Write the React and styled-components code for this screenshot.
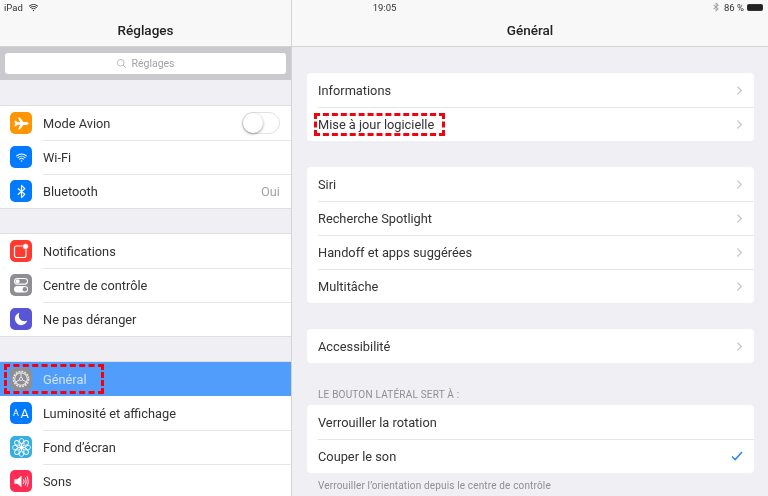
import React from 'react'
import styled, { createGlobalStyle } from 'styled-components'
import { IoAirplane, IoWifi, IoBluetooth, IoMoon, IoSearchOutline, IoChevronForward } from 'react-icons/io5'

const GlobalStyle = createGlobalStyle`
  html, body { margin: 0; padding: 0; background: #efeff4; }
  body { font-family: Roboto, "Liberation Sans", sans-serif; color: #333; overflow: hidden; }
`

const Screen = styled.div`
  width: 768px;
  height: 496px;
  overflow: hidden;
  position: relative;
  display: grid;
  grid-template-columns: 292px 1fr;
  background: #efeff4;
  filter: blur(0.6px);
`

const StatusBar = styled.div`
  position: absolute;
  top: 0;
  left: 0;
  right: 0;
  height: 14px;
  padding: 0 3px 0 4px;
  display: grid;
  grid-template-columns: 1fr auto 1fr;
  align-items: center;
  font-size: 9.5px;
  color: #333;
`

const StatusSide = styled.div`
  display: flex;
  align-items: center;
  justify-content: ${p => (p.$end ? 'flex-end' : 'flex-start')};
  gap: ${p => (p.$end ? '3px' : '5px')};
`

const Battery = styled.span`
  width: 16px;
  height: 7px;
  background: #222;
  border: 1px solid #333;
  border-radius: 1.5px;
  box-sizing: border-box;
  margin-right: 2px;
`

const Pane = styled.section`
  min-width: 0;
  height: 496px;
  overflow: hidden;
  background: #efeff4;
  border-right: ${p => (p.$side ? '1px solid #d3d3d8' : 'none')};
`

const NavBar = styled.header`
  height: 47px;
  box-sizing: border-box;
  padding-top: 14px;
  background: #f8f8f8;
  border-bottom: 1px solid #d4d4d6;
  display: flex;
  align-items: center;
  justify-content: center;
  font-size: 13.5px;
  font-weight: 500;
  color: #222;
`

const SearchBand = styled.div`
  height: 33px;
  box-sizing: border-box;
  padding: 6px 5px;
  background: #c9c9ce;
`

const SearchField = styled.div`
  height: 21px;
  background: #fff;
  border-radius: 3px;
  display: flex;
  align-items: center;
  justify-content: center;
  gap: 4px;
  font-size: 10.5px;
  color: #a3a3a8;
`

const SideGroup = styled.div`
  margin-top: 26px;
  background: #fff;
  box-shadow: 0 -1px #e0e0e3, 0 1px #e0e0e3;
`

const SideRow = styled.div`
  position: relative;
  height: 34px;
  box-sizing: border-box;
  display: flex;
  align-items: center;
  padding: 0 11px 0 10px;
  gap: 11px;
  font-size: 12.8px;
  background: ${p => (p.$active ? '#509dfb' : 'transparent')};
  color: ${p => (p.$active ? '#cfe4fd' : '#333')};

  & + &::before {
    content: '';
    position: absolute;
    top: 0;
    left: 43px;
    right: 0;
    height: 1px;
    background: #e6e6e9;
  }
`

const IconTile = styled.span`
  width: 22px;
  height: 22px;
  flex: none;
  border-radius: 5px;
  display: flex;
  align-items: center;
  justify-content: center;
  gap: 1.5px;
  color: #fff;
  background: ${p => p.$bg};
`

const SizeText = styled.span`
  font-size: ${p => p.$size}px;
  line-height: 1;
  font-weight: 400;
`

const RowLabel = styled.span`
  flex: 1;
`

const RowValue = styled.span`
  color: #a4a4a8;
  font-size: 12.8px;
`

const Toggle = styled.span`
  position: relative;
  width: 38px;
  height: 22px;
  box-sizing: border-box;
  border: 1px solid #e2e2e5;
  border-radius: 11px;
  background: #fff;
`

const Knob = styled.span`
  position: absolute;
  top: 0;
  left: 0;
  width: 20px;
  height: 20px;
  border-radius: 50%;
  background: #fff;
  box-shadow: 0 1px 3px rgba(0, 0, 0, 0.4);
`

const DashedBox = styled.span`
  position: absolute;
  left: ${p => p.$left}px;
  top: ${p => p.$top}px;
  width: ${p => p.$w}px;
  height: ${p => p.$h}px;
  box-sizing: border-box;
  border: 3px dashed #f5000f;
  pointer-events: none;
`

const Content = styled.div`
  padding: 26px 14px 0 15px;
`

const Card = styled.div`
  background: #fff;
  border-radius: 4px;
  margin-bottom: 26px;
`

const CardRow = styled.div`
  position: relative;
  height: 34px;
  display: flex;
  align-items: center;
  justify-content: space-between;
  padding: 0 11px;
  font-size: 12.8px;
  color: #333;

  & + &::before {
    content: '';
    position: absolute;
    top: 0;
    left: 11px;
    right: 0;
    height: 1px;
    background: #e6e6e9;
  }
`

const Chevron = styled(IoChevronForward)`
  color: #c5c5ca;
  font-size: 13px;
  margin-right: -3px;
`

const CardHead = styled.div`
  margin: 0 0 4px 11px;
  height: 12px;
  line-height: 12px;
  font-size: 10px;
  letter-spacing: 0.2px;
  color: #8e8e93;
`

const CardFoot = styled.div`
  margin: -19px 0 0 11px;
  font-size: 10px;
  letter-spacing: 0.15px;
  color: #8e8e93;
`

const CheckIcon = () => (
  <svg width="12" height="10" viewBox="0 0 12 10" fill="none" stroke="#2f88f5" strokeWidth="1.6">
    <path d="M1 5.5 L4.2 8.5 L11 1" />
  </svg>
)

const NotifIcon = () => (
  <svg width="16" height="16" viewBox="0 0 16 16" fill="none">
    <rect x="1.5" y="3" width="11.5" height="11.5" rx="2" stroke="#fff" strokeWidth="1.2" />
    <circle cx="12.5" cy="3.5" r="3" fill="#fff" stroke="#ff3b30" strokeWidth="0.8" />
  </svg>
)

const ControlIcon = () => (
  <svg width="18" height="18" viewBox="0 0 18 18" fill="none">
    <rect x="2.5" y="2.5" width="13" height="5.6" rx="2.8" stroke="#fff" strokeWidth="1.1" />
    <circle cx="5.6" cy="5.3" r="2" fill="#fff" />
    <rect x="2" y="10" width="14" height="6.4" rx="3.2" fill="#fff" />
    <circle cx="12.8" cy="13.2" r="2.2" fill="#8e8e93" />
  </svg>
)

const GearIcon = () => (
  <svg width="20" height="20" viewBox="0 0 20 20" fill="none" stroke="#e8e8ea">
    <circle cx="10" cy="10" r="7.6" strokeWidth="1.6" strokeDasharray="1.9 1.1" />
    <circle cx="10" cy="10" r="6.3" strokeWidth="1.1" />
    <circle cx="10" cy="10" r="1.6" strokeWidth="0.9" />
    <path d="M10 8.4 V4 M11.4 10.8 L15.2 13 M8.6 10.8 L4.8 13" strokeWidth="1" />
  </svg>
)

const FlowerIcon = () => (
  <svg width="19" height="19" viewBox="0 0 20 20" fill="none" stroke="#fff" strokeWidth="1">
    {[0, 45, 90, 135, 180, 225, 270, 315].map(a => (
      <ellipse key={a} cx="10" cy="5" rx="2.6" ry="4.4" transform={`rotate(${a} 10 10)`} />
    ))}
  </svg>
)

const SoundIcon = () => (
  <svg width="17" height="17" viewBox="0 0 18 18" fill="none" stroke="#fff">
    <path d="M1.5 6.5 H4.5 L9 3 V15 L4.5 11.5 H1.5 Z" fill="#fff" stroke="none" />
    <path d="M11 6.5 Q12.5 9 11 11.5" strokeWidth="1" />
    <path d="M13 5 Q15 9 13 13" strokeWidth="1" />
    <path d="M15 3.5 Q17.5 9 15 14.5" strokeWidth="1" />
  </svg>
)

const topGroup = [
  { label: 'Notifications', bg: '#ff3b30', icon: <NotifIcon /> },
  { label: 'Centre de contrôle', bg: '#8e8e93', icon: <ControlIcon /> },
  { label: 'Ne pas déranger', bg: '#5856d6', icon: <IoMoon size={14} /> },
]

const lowerGroup = [
  { label: 'Général', bg: '#8e8e93', icon: <GearIcon />, active: true },
  {
    label: 'Luminosité et affichage',
    bg: '#007aff',
    icon: (
      <>
        <SizeText $size={9}>A</SizeText>
        <SizeText $size={13}>A</SizeText>
      </>
    ),
  },
  { label: 'Fond d’écran', bg: '#37aee2', icon: <FlowerIcon /> },
  { label: 'Sons', bg: '#ff2d55', icon: <SoundIcon /> },
]

const renderSideRow = row => (
  <SideRow key={row.label} $active={row.active}>
    <IconTile $bg={row.bg}>{row.icon}</IconTile>
    <RowLabel>{row.label}</RowLabel>
  </SideRow>
)

const App = () => (
  <Screen>
    <GlobalStyle />
    <Pane $side>
      <NavBar>Réglages</NavBar>
      <SearchBand>
        <SearchField>
          <IoSearchOutline size={11} />
          Réglages
        </SearchField>
      </SearchBand>
      <SideGroup>
        <SideRow>
          <IconTile $bg="#ff9500"><IoAirplane size={15} /></IconTile>
          <RowLabel>Mode Avion</RowLabel>
          <Toggle><Knob /></Toggle>
        </SideRow>
        <SideRow>
          <IconTile $bg="#007aff"><IoWifi size={13} /></IconTile>
          <RowLabel>Wi-Fi</RowLabel>
        </SideRow>
        <SideRow>
          <IconTile $bg="#007aff"><IoBluetooth size={15} /></IconTile>
          <RowLabel>Bluetooth</RowLabel>
          <RowValue>Oui</RowValue>
        </SideRow>
      </SideGroup>
      <SideGroup>{topGroup.map(renderSideRow)}</SideGroup>
      <SideGroup>{lowerGroup.map(renderSideRow)}</SideGroup>
    </Pane>
    <Pane>
      <NavBar>Général</NavBar>
      <Content>
        <Card>
          <CardRow>Informations<Chevron /></CardRow>
          <CardRow>Mise à jour logicielle<Chevron /></CardRow>
        </Card>
        <Card>
          <CardRow>Siri<Chevron /></CardRow>
          <CardRow>Recherche Spotlight<Chevron /></CardRow>
          <CardRow>Handoff et apps suggérées<Chevron /></CardRow>
          <CardRow>Multitâche<Chevron /></CardRow>
        </Card>
        <Card>
          <CardRow>Accessibilité<Chevron /></CardRow>
        </Card>
        <CardHead>LE BOUTON LATÉRAL SERT À :</CardHead>
        <Card>
          <CardRow>Verrouiller la rotation</CardRow>
          <CardRow>Couper le son<CheckIcon /></CardRow>
        </Card>
        <CardFoot>Verrouiller l’orientation depuis le centre de contrôle</CardFoot>
      </Content>
    </Pane>
    <StatusBar>
      <StatusSide>
        iPad
        <IoWifi size={11} />
      </StatusSide>
      <span>19:05</span>
      <StatusSide $end>
        <IoBluetooth size={10} color="#999" />
        86 %
        <Battery />
      </StatusSide>
    </StatusBar>
    <DashedBox $left={4} $top={364} $w={100} $h={30} />
    <DashedBox $left={314} $top={113} $w={131} $h={23} />
  </Screen>
)

export default App
